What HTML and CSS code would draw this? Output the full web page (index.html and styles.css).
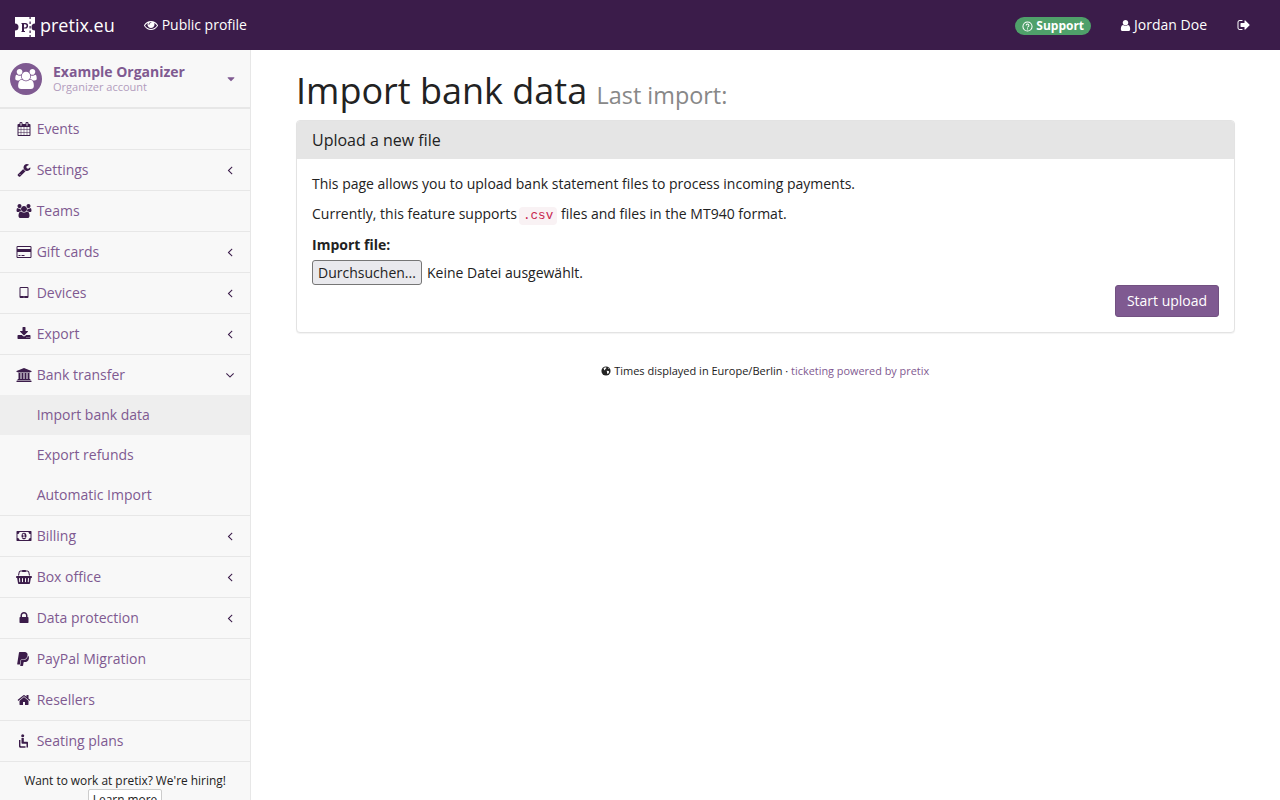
FILE: index.html
```html
<!DOCTYPE html>
<html lang="en">
<head>
<meta charset="utf-8">
<title>Import bank data</title>
<link rel="stylesheet" href="styles.css">
</head>
<body>
<svg class="defs" aria-hidden="true">
<symbol id="i-calendar" viewBox="0 0 1664 1792"><path d="M128 1664h288v-288h-288v288zm352 0h320v-288h-320v288zm-352-352h288v-320h-288v320zm352 0h320v-320h-320v320zm-352-384h288v-288h-288v288zm736 736h320v-288h-320v288zm-384-736h320v-288h-320v288zm768 736h288v-288h-288v288zm-384-352h320v-320h-320v320zm-352-864v-288q0-13-9.500-22.500t-22.500-9.500h-64q-13 0-22.500 9.500t-9.500 22.500v288q0 13 9.500 22.500t22.500 9.500h64q13 0 22.500-9.500t9.500-22.500zm736 864h288v-320h-288v320zm-384-384h320v-288h-320v288zm384 0h288v-288h-288v288zm32-480v-288q0-13-9.500-22.500t-22.500-9.500h-64q-13 0-22.500 9.500t-9.500 22.500v288q0 13 9.500 22.500t22.500 9.500h64q13 0 22.500-9.500t9.500-22.500zm384-64v1280q0 52-38 90t-90 38h-1408q-52 0-90-38t-38-90v-1280q0-52 38-90t90-38h128v-96q0-66 47-113t113-47h64q66 0 113 47t47 113v96h384v-96q0-66 47-113t113-47h64q66 0 113 47t47 113v96h128q52 0 90 38t38 90z"/></symbol>
<symbol id="i-wrench" viewBox="0 0 1792 1792"><path d="M448 1472q0-26-19-45t-45-19-45 19-19 45 19 45 45 19 45-19 19-45zm644-420l-682 682q-37 37-90 37-52 0-91-37l-106-108q-38-36-38-90 0-53 38-91l681-681q39 98 114.500 173.500t173.500 114.500zm634-435q0 39-23 106-47 134-164.500 217.500t-258.500 83.500q-185 0-316.500-131.500t-131.500-316.500 131.500-316.500 316.500-131.500q58 0 121.500 16.500t107.500 46.500q16 11 16 28t-16 28l-293 169v224l193 107q5-3 79-48.500t135.500-81 70.500-35.500q15 0 23.500 10t8.500 25z"/></symbol>
<symbol id="i-users" viewBox="0 0 1920 1792"><path d="M593 896q-162 5-265 128h-134q-82 0-138-40.500t-56-118.500q0-353 124-353 6 0 43.500 21t97.500 42.500 119 21.500q67 0 133-23-5 37-5 66 0 139 81 256zm1071 637q0 120-73 189.500t-194 69.500h-874q-121 0-194-69.500t-73-189.500q0-53 3.500-103.500t14-109 26.500-108.500 43-97.500 62-81 85.500-53.500 111.500-20q10 0 43 21.500t73 48 107 48 135 21.500 135-21.500 107-48 73-48 43-21.500q61 0 111.500 20t85.500 53.500 62 81 43 97.500 26.500 108.500 14 109 3.500 103.500zm-1024-1277q0 106-75 181t-181 75-181-75-75-181 75-181 181-75 181 75 75 181zm704 384q0 159-112.500 271.500t-271.500 112.500-271.500-112.500-112.500-271.500 112.500-271.500 271.500-112.500 271.500 112.500 112.500 271.500zm576 225q0 78-56 118.500t-138 40.500h-134q-103-123-265-128 81-117 81-256 0-29-5-66 66 23 133 23 59 0 119-21.500t97.500-42.500 43.500-21q124 0 124 353zm-128-609q0 106-75 181t-181 75-181-75-75-181 75-181 181-75 181 75 75 181z"/></symbol>
<symbol id="i-card" viewBox="0 0 1920 1792"><path d="M1760 128q66 0 113 47t47 113v1216q0 66-47 113t-113 47h-1600q-66 0-113-47t-47-113v-1216q0-66 47-113t113-47h1600zm-1600 128q-13 0-22.500 9.500t-9.500 22.500v224h1664v-224q0-13-9.500-22.500t-22.500-9.500h-1600zm1600 1280q13 0 22.500-9.500t9.500-22.500v-608h-1664v608q0 13 9.500 22.500t22.500 9.500h1600zm-1504-128v-128h256v128h-256zm384 0v-128h384v128h-384z"/></symbol>
<symbol id="i-tablet" viewBox="0 0 1792 1792"><path d="M960 1408q0-26-19-45t-45-19-45 19-19 45 19 45 45 19 45-19 19-45zm384-160v-960q0-13-9.500-22.500t-22.500-9.500h-832q-13 0-22.500 9.500t-9.500 22.500v960q0 13 9.500 22.500t22.500 9.500h832q13 0 22.500-9.500t9.500-22.500zm128-960v1088q0 66-47 113t-113 47h-832q-66 0-113-47t-47-113v-1088q0-66 47-113t113-47h832q66 0 113 47t47 113z"/></symbol>
<symbol id="i-download" viewBox="0 0 1792 1792"><path d="M1344 1344q0-26-19-45t-45-19-45 19-19 45 19 45 45 19 45-19 19-45zm256 0q0-26-19-45t-45-19-45 19-19 45 19 45 45 19 45-19 19-45zm128-224v320q0 40-28 68t-68 28h-1472q-40 0-68-28t-28-68v-320q0-40 28-68t68-28h465l135 136q58 56 136 56t136-56l136-136h464q40 0 68 28t28 68zm-325-569q17 41-14 70l-448 448q-18 19-45 19t-45-19l-448-448q-31-29-14-70 17-39 59-39h256v-448q0-26 19-45t45-19h256q26 0 45 19t19 45v448h256q42 0 59 39z"/></symbol>
<symbol id="i-bank" viewBox="0 0 1920 1792"><path d="M960 0l960 384v128h-128q0 26-20.500 45t-48.500 19h-1526q-28 0-48.500-19t-20.500-45h-128v-128zm-704 640h256v768h128v-768h256v768h128v-768h256v768h128v-768h256v768h59q28 0 48.500 19t20.500 45v64h-1664v-64q0-26 20.500-45t48.500-19h59v-768zm1595 960q28 0 48.500 19t20.500 45v128h-1920v-128q0-26 20.500-45t48.500-19h1782z"/></symbol>
<symbol id="i-money" viewBox="0 0 1920 1792"><path d="M768 1152h384v-96h-128v-448h-114l-148 137 77 80q42-37 55-57h2v288h-128v96zm512-256q0 70-21 142t-59.500 134-101.500 101-138 39-138-39-101.500-101-59.500-134-21-142 21-142 59.500-134 101.500-101 138-39 138 39 101.500 101 59.500 134 21 142zm512 256v-512q-106 0-181-75t-75-181h-1152q0 106-75 181t-181 75v512q106 0 181 75t75 181h1152q0-106 75-181t181-75zm128-832v1152q0 26-19 45t-45 19h-1792q-26 0-45-19t-19-45v-1152q0-26 19-45t45-19h1792q26 0 45 19t19 45z"/></symbol>
<symbol id="i-basket" viewBox="0 0 2048 1792"><path d="M1920 768q53 0 90.500 37.500t37.500 90.500-37.500 90.500-90.500 37.500h-15l-115 662q-8 46-44 76t-82 30h-1280q-46 0-82-30t-44-76l-115-662h-15q-53 0-90.500-37.500t-37.500-90.500 37.500-90.500 90.500-37.500h1792zm-1435 800q26-2 43.500-22.500t15.500-46.500l-32-416q-2-26-22.500-43.500t-46.500-15.500-43.500 22.500-15.500 46.500l32 416q2 25 20.500 42t43.500 17h5zm411-64v-416q0-26-19-45t-45-19-45 19-19 45v416q0 26 19 45t45 19 45-19 19-45zm384 0v-416q0-26-19-45t-45-19-45 19-19 45v416q0 26 19 45t45 19 45-19 19-45zm352 5l32-416q2-26-15.500-46.500t-43.500-22.500-46.500 15.500-22.500 43.500l-32 416q-2 26 15.500 46.500t43.500 22.500h5q25 0 43.500-17t20.500-42zm-1156-1217l-93 412h-132l101-441q19-88 89-143.500t160-55.500h167q0-26 19-45t45-19h384q26 0 45 19t19 45h167q90 0 160 55.500t89 143.500l101 441h-132l-93-412q-11-44-45.500-72t-79.500-28h-167q0 26-19 45t-45 19h-384q-26 0-45-19t-19-45h-167q-45 0-79.500 28t-45.500 72z"/></symbol>
<symbol id="i-lock" viewBox="0 0 1792 1792"><path d="M640 768h512v-192q0-106-75-181t-181-75-181 75-75 181v192zm832 96v576q0 40-28 68t-68 28h-960q-40 0-68-28t-28-68v-576q0-40 28-68t68-28h32v-192q0-184 132-316t316-132 316 132 132 316v192h32q40 0 68 28t28 68z"/></symbol>
<symbol id="i-paypal" viewBox="0 0 1792 1792"><path d="M1519 646q18 84-4 204-87 444-565 444h-44q-25 0-44 16.500t-24 42.500l-4 19-55 346-2 15q-5 26-24.500 42.500t-44.500 16.500h-251q-21 0-33-15t-9-36q9-56 26.500-168t26.500-168 27-167.500 27-167.500q5-37 43-37h131q133 2 236-21 175-39 287-144 102-95 155-246 24-70 35-133 1-6 2.500-7.500t3.500-1 6 3.500q79 59 98 162zm-172-282q0 107-46 236-80 233-302 315-113 40-239 42 0 1-90 1l-90-1q-100 0-118 96-2 8-85 530-1 10-12 10h-295q-22 0-36.500-16.500t-11.500-38.500l232-1471q5-29 27.500-48t51.500-19h598q34 0 97.500 13t111.500 32q107 41 163.500 123t56.500 196z"/></symbol>
<symbol id="i-home" viewBox="0 0 1792 1792"><path d="M1472 992v480q0 26-19 45t-45 19h-384v-384h-256v384h-384q-26 0-45-19t-19-45v-480q0-1 .5-3t.5-3l575-474 575 474q1 2 1 6zm223-69l-62 74q-8 9-21 11h-3q-13 0-21-7l-692-577-692 577q-12 8-24 7-13-2-21-11l-62-74q-8-10-7-23.500t11-21.500l719-599q32-26 76-26t76 26l244 204v-195q0-14 9-23t23-9h192q14 0 23 9t9 23v408l219 182q10 8 11 21.500t-7 23.500z"/></symbol>
<symbol id="i-wheelchair" viewBox="0 0 14 14"><circle cx="5.700" cy="1.800" r="1.500"/><path d="M4.500 4h2.300v3.800h3.200c.6 0 1 .4 1 1V13.500H9.500V9.700H5.300c-.5 0-.8-.3-.8-.8z"/><path d="M2 6h1.400v5.600c0 .4.300.7.700.7h4.400v1.400H3.500c-.9 0-1.500-.6-1.500-1.500z"/></symbol>
<symbol id="i-left" viewBox="0 0 1792 1792"><path d="M1203 544q0 13-10 23l-393 393 393 393q10 10 10 23t-10 23l-50 50q-10 10-23 10t-23-10l-466-466q-10-10-10-23t10-23l466-466q10-10 23-10t23 10l50 50q10 10 10 23z"/></symbol>
<symbol id="i-down" viewBox="0 0 1792 1792"><path d="M1395 736q0 13-10 23l-466 466q-10 10-23 10t-23-10l-466-466q-10-10-10-23t10-23l50-50q10-10 23-10t23 10l393 393 393-393q10-10 23-10t23 10l50 50q10 10 10 23z"/></symbol>
<symbol id="i-caret" viewBox="0 0 1792 1792"><path d="M1408 704q0 26-19 45l-448 448q-19 19-45 19t-45-19l-448-448q-19-19-19-45t19-45 45-19h896q26 0 45 19t19 45z"/></symbol>
<symbol id="i-eye" viewBox="0 0 1792 1792"><path d="M1664 960q-152-236-381-353 61 104 61 225 0 185-131.500 316.500t-316.500 131.500-316.500-131.500-131.500-316.500q0-121 61-225-229 117-381 353 133 205 333.500 326.500t434.500 121.500 434.500-121.500 333.500-326.500zm-720-384q0-20-14-34t-34-14q-125 0-214.500 89.500t-89.500 214.500q0 20 14 34t34 14 34-14 14-34q0-86 61-147t147-61q20 0 34-14t14-34zm848 384q0 34-20 69-140 230-376.500 368.500t-499.500 138.500-499.500-139-376.500-368q-20-35-20-69t20-69q140-229 376.500-368t499.500-139 499.500 139 376.500 368q20 35 20 69z"/></symbol>
<symbol id="i-user" viewBox="0 0 1792 1792"><path d="M1536 1399q0 109-62.500 187t-150.500 78h-854q-88 0-150.500-78t-62.500-187q0-85 8.500-160.500t31.500-152 58.500-131 94-89 134.500-34.500q131 128 313 128t313-128q76 0 134.500 34.500t94 89 58.500 131 31.500 152 8.500 160.500zm-256-887q0 159-112.500 271.500t-271.500 112.500-271.500-112.500-112.500-271.500 112.500-271.500 271.500-112.500 271.500 112.500 112.500 271.500z"/></symbol>
<symbol id="i-signout" viewBox="0 0 1792 1792"><path d="M704 1440q0 4 1 20t.5 26.500-3 23.500-10 19.500-20.500 6.500h-320q-119 0-203.500-84.500t-84.500-203.500v-704q0-119 84.500-203.500t203.500-84.500h320q13 0 22.500 9.500t9.500 22.500q0 4 1 20t.5 26.500-3 23.500-10 19.500-20.500 6.500h-320q-66 0-113 47t-47 113v704q0 66 47 113t113 47h312l11.500 1 11.500 3 8 5.500 7 9 2 13.500zm928-544q0 26-19 45l-544 544q-19 19-45 19t-45-19-19-45v-288h-448q-26 0-45-19t-19-45v-384q0-26 19-45t45-19h448v-288q0-26 19-45t45-19 45 19l544 544q19 19 19 45z"/></symbol>
</svg>

<header class="topbar">
  <a class="brand">
    <svg class="brand-logo" viewBox="0 0 20 20"><path fill="#fff" d="M0 0h20v6.500a3.500 3.500 0 0 0 0 7V20H0v-6.500a3.500 3.500 0 0 0 0-7z"/><path fill="#3b1c4a" d="M7 6h3.300a2.500 2.500 0 0 1 0 5.600H9V14h1v1H6.500v-1H7V7H6.500V6zM9 7.200v3.200h1a1.600 1.600 0 0 0 0-3.200zM14.500 0h1.200v2h-1.200zM14.500 4.500h1.200v2.500h-1.200zM14.500 9h1.200v2.500h-1.200zM14.500 13.500h1.200v2.500h-1.200zM14.500 18h1.200v2h-1.200z"/></svg>
    <span>pretix.eu</span>
  </a>
  <a class="toplink"><svg class="ico ico-eye"><use href="#i-eye"/></svg>Public profile</a>
  <div class="topright">
    <span class="support"><svg class="q-ico" viewBox="0 0 12 12"><circle cx="6" cy="6" r="5" fill="none" stroke="#fff" stroke-width="1.100"/><path d="M4.500 4.800a1.500 1.500 0 1 1 2.300 1.300c-.6.400-.8.600-.8 1.100" fill="none" stroke="#fff" stroke-width="1.100"/><rect x="5.400" y="8" width="1.200" height="1.200" fill="#fff"/></svg>Support</span>
    <a class="toplink user"><svg class="ico ico-user"><use href="#i-user"/></svg>Jordan Doe</a>
    <svg class="ico ico-out"><use href="#i-signout"/></svg>
  </div>
</header>

<div class="layout">
  <aside class="sidebar">
    <div class="org">
      <span class="org-avatar"><svg><use href="#i-users"/></svg></span>
      <div class="org-text">
        <strong>Example Organizer</strong>
        <small>Organizer account</small>
      </div>
      <svg class="org-caret"><use href="#i-caret"/></svg>
    </div>
    <nav>
      <a class="item"><span class="icon-box"><svg><use href="#i-calendar"/></svg></span>Events</a>
      <a class="item"><span class="icon-box"><svg><use href="#i-wrench"/></svg></span>Settings<svg class="arrow"><use href="#i-left"/></svg></a>
      <a class="item"><span class="icon-box"><svg><use href="#i-users"/></svg></span>Teams</a>
      <a class="item"><span class="icon-box"><svg><use href="#i-card"/></svg></span>Gift cards<svg class="arrow"><use href="#i-left"/></svg></a>
      <a class="item"><span class="icon-box"><svg><use href="#i-tablet"/></svg></span>Devices<svg class="arrow"><use href="#i-left"/></svg></a>
      <a class="item"><span class="icon-box"><svg><use href="#i-download"/></svg></span>Export<svg class="arrow"><use href="#i-left"/></svg></a>
      <div class="group">
        <a class="item item-open"><span class="icon-box"><svg><use href="#i-bank"/></svg></span>Bank transfer<svg class="arrow"><use href="#i-down"/></svg></a>
        <a class="sub active">Import bank data</a>
        <a class="sub">Export refunds</a>
        <a class="sub">Automatic Import</a>
      </div>
      <a class="item"><span class="icon-box"><svg><use href="#i-money"/></svg></span>Billing<svg class="arrow"><use href="#i-left"/></svg></a>
      <a class="item"><span class="icon-box"><svg><use href="#i-basket"/></svg></span>Box office<svg class="arrow"><use href="#i-left"/></svg></a>
      <a class="item"><span class="icon-box"><svg><use href="#i-lock"/></svg></span>Data protection<svg class="arrow"><use href="#i-left"/></svg></a>
      <a class="item"><span class="icon-box"><svg><use href="#i-paypal"/></svg></span>PayPal Migration</a>
      <a class="item"><span class="icon-box"><svg><use href="#i-home"/></svg></span>Resellers</a>
      <a class="item"><span class="icon-box"><svg><use href="#i-wheelchair"/></svg></span>Seating plans</a>
    </nav>
    <div class="hiring">
      <div>Want to work at pretix? We're hiring!</div>
      <a class="learn">Learn more</a>
    </div>
  </aside>

  <main class="content">
    <h1>Import bank data <small>Last import:</small></h1>
    <section class="panel">
      <h2 class="panel-head">Upload a new file</h2>
      <div class="panel-body">
        <p>This page allows you to upload bank statement files to process incoming payments.</p>
        <p>Currently, this feature supports <code>.csv</code> files and files in the MT940 format.</p>
        <label class="field-label">Import file:</label>
        <div class="file-row"><button class="file-btn" type="button">Durchsuchen...</button><span>Keine Datei ausgewählt.</span></div>
        <div class="actions"><button class="primary" type="button">Start upload</button></div>
      </div>
    </section>
    <footer class="foot">
      <svg class="globe" viewBox="0 0 12 12"><circle cx="6" cy="6" r="5.500" fill="#222"/><path fill="#fff" d="M3 2.600l2-1 1.600.4-.6 1.200-1.200.4.400 1.200-1.200.2zM6.800 5.600l2.500.4.500 1.500-1.500 2-.9-.5-.2-1.800zM8.200 2.200l1.200.8-.8.500z"/></svg>
      Times displayed in Europe/Berlin · <a>ticketing powered by pretix</a>
    </footer>
  </main>
</div>
</body>
</html>
```

FILE: styles.css
```css
* { box-sizing: border-box; }
html, body { margin: 0; padding: 0; height: 100%; overflow: hidden; }
body { font-family: "Open Sans", sans-serif; font-size: 14px; line-height: 20px; color: #222; background: #fff; }
.defs { display: none; }
svg { fill: currentColor; display: block; }

.topbar { height: 50px; background: #3b1c4a; color: #fff; display: flex; align-items: center; padding-left: 15px; }
.brand { display: flex; align-items: center; gap: 5px; font-size: 18px; width: 129px; }
.brand-logo { width: 20px; height: 20px; flex: none; position: relative; top: 2px; }
.toplink { display: flex; align-items: center; color: #fff; }
.ico-eye { width: 14px; height: 14px; margin-right: 3.640px; }
.topright { margin-left: auto; display: flex; align-items: center; padding-right: 29px; }
.support { display: flex; align-items: center; background: #4fa06a; border-radius: 10px; height: 18px; padding: 0 7px; font-size: 12px; font-weight: 700; color: #fff; margin-right: 28px; position: relative; top: 1px; }
.q-ico { width: 11px; height: 11px; margin-right: 3px; }
.ico-user { width: 13px; height: 13px; margin-right: 2px; }
.ico-out { width: 14px; height: 14px; margin-left: 30px; color: #fff; }

.layout { display: flex; height: 750px; }
.sidebar { width: 251px; flex: none; background: #f8f8f8; border-right: 1px solid #e7e7e7; overflow: hidden; }
.org { height: 59px; display: flex; align-items: center; padding-left: 10px; border-bottom: 2px solid #e7e7e7; position: relative; }
.org-avatar { width: 32px; height: 32px; border-radius: 50%; background: #7f5a91; color: #fff; display: flex; align-items: center; justify-content: center; margin-right: 11px; flex: none; }
.org-avatar svg { width: 22px; height: 20px; }
.org-text { display: flex; flex-direction: column; }
.org-text strong { color: #7f5a91; font-size: 14px; line-height: 16px; }
.org-text small { color: #b29cbd; font-size: 11px; line-height: 14px; }
.org-caret { width: 12px; height: 12px; color: #7f5a91; position: absolute; right: 13px; top: 23px; }

.item { height: 41px; display: flex; align-items: center; color: #7f5a91; border-bottom: 1px solid #e7e7e7; padding-left: 15px; position: relative; }
.item-open { height: 40px; border-bottom: 0; }
.icon-box { width: 18px; height: 16px; margin-right: 3.640px; color: #3b1c4a; display: flex; align-items: center; justify-content: center; flex: none; }
.icon-box svg { width: 18px; height: 14px; }
.arrow { width: 14px; height: 14px; color: #3b1c4a; position: absolute; left: 223px; top: 13px; }
.group { border-bottom: 1px solid #e7e7e7; }
.sub { display: flex; align-items: center; height: 40px; padding-left: 36.640px; color: #7f5a91; }
.sub.active { background: #eeeeee; }

.hiring { text-align: center; font-size: 11.900px; line-height: 18px; color: #222; padding-top: 9px; }
.learn { display: inline-block; border: 1px solid #ccc; background: #fff; border-radius: 2px; padding: 0 4px; line-height: 18px; color: #222; }

.content { flex: 1; padding: 0 45px; min-width: 0; }
h1 { margin: 21px 0 9px; font-size: 36px; line-height: 40px; font-weight: 400; color: #222; }
h1 small { font-size: 23.400px; line-height: 1; color: #888; }
.panel { border: 1px solid #e3e3e3; border-radius: 4px; box-shadow: 0 1px 1px rgba(0,0,0,.05); background: #fff; margin-bottom: 30px; overflow: hidden; }
.panel-head { margin: 0; background: #e5e5e5; font-size: 16px; font-weight: 400; line-height: 18px; padding: 10px 15px; height: 38px; color: #222; }
.panel-body { padding: 15px; height: 173px; }
p { margin: 0 0 10px; }
code { font-family: "Liberation Mono", monospace; font-size: 12.600px; line-height: 1; color: #c7254e; background: #f9f2f4; padding: 2px 4px; border-radius: 4px; margin: 0 .2px 0 -1.500px; }
.field-label { display: block; font-weight: 700; margin-top: 11px; margin-bottom: 5px; }
.file-row { display: flex; align-items: center; height: 25px; }
.file-btn { font-family: inherit; font-size: 14px; height: 25px; width: 110px; padding: 0; border: 1px solid #767676; border-radius: 3px; background: #e9e9ed; color: #222; margin-right: 5px; }
.actions { display: flex; justify-content: flex-end; }
.primary { font-family: inherit; font-size: 14px; height: 32px; width: 104px; padding: 0 0 2px; background: #7f5a91; color: #fff; border: 1px solid #725181; border-radius: 3px; }
.foot { text-align: center; font-size: 11px; line-height: 16px; color: #222; padding-right: .500px; }
.foot a { color: #7f5a91; font-size: 10.900px; }
.globe { display: inline-block; vertical-align: -1px; width: 10px; height: 10px; }
```
